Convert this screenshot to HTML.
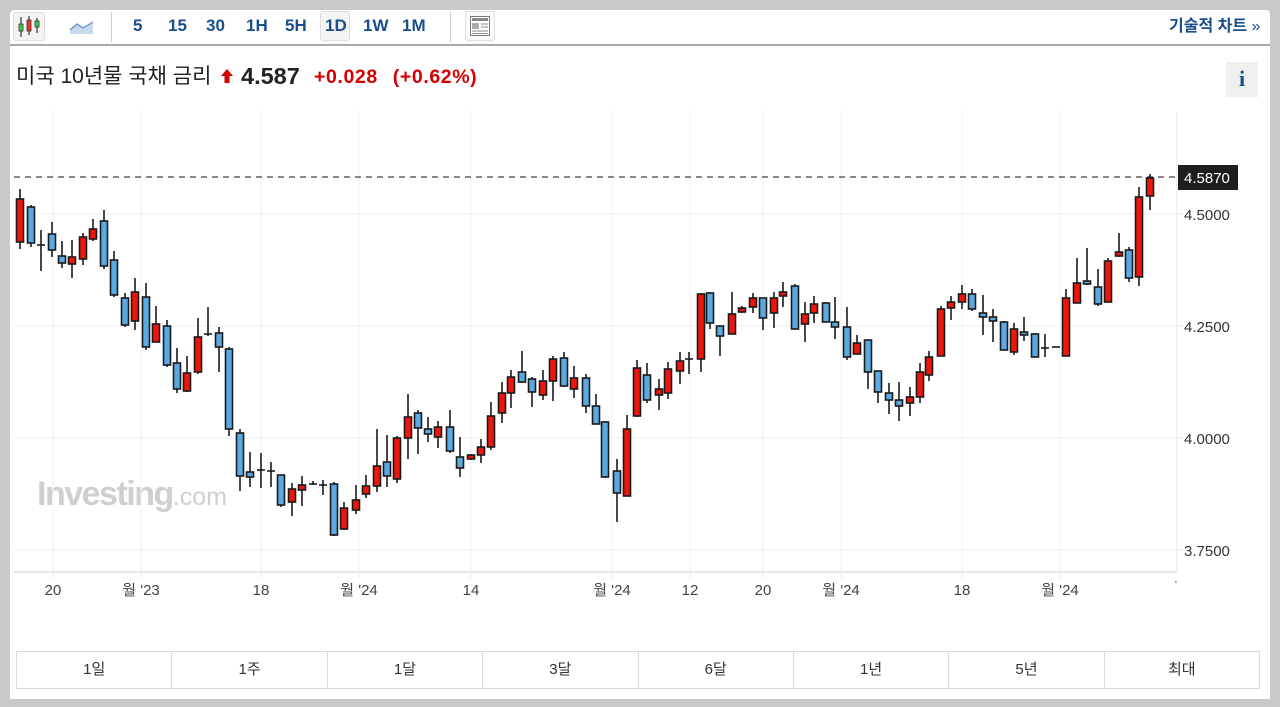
<!DOCTYPE html>
<html><head><meta charset="utf-8"><style>
*{margin:0;padding:0;box-sizing:border-box}
body{width:1280px;height:707px;background:#c9c9c9;font-family:"Liberation Sans","Noto Sans CJK KR",sans-serif;position:relative;overflow:hidden}
#panel{position:absolute;left:10px;top:10px;width:1260px;height:689px;background:#fff;border-radius:4px 4px 0 0}
.tb{position:absolute;top:0;left:0;width:1260px;height:36px;border-bottom:2px solid #a8a8a8}
.tf{position:absolute;top:6px;font-size:17px;font-weight:bold;color:#1b4f8c}
.btn{position:absolute;border:1px solid #ddd;border-radius:3px;background:#f4f4f4}
.sep{position:absolute;top:0;width:1px;height:30px;background:#ccc}
.title{position:absolute;left:6px;top:54px;font-size:21px;color:#222;line-height:26px}
.xl{position:absolute;top:573px;font-size:15px;color:#444;transform:translateX(-50%);line-height:18px;white-space:nowrap}
.yl{position:absolute;left:1174px;font-size:15px;color:#333}
.bt{position:absolute;top:641px;left:6px;width:1244px;height:38px;border:1px solid #d8d8d8;display:flex}
.bt div{flex:1;border-right:1px solid #d8d8d8;text-align:center;line-height:36px;font-size:15px;color:#333}
.bt div:last-child{border-right:none}
</style></head><body>
<div id="panel">
<div class="tb">
 <div class="btn" style="left:3px;top:2px;width:32px;height:29px"></div>
 <svg style="position:absolute;left:7px;top:5px" width="26" height="24"><g stroke="#333" stroke-width="1.2"><line x1="4" y1="2" x2="4" y2="22"/><line x1="12" y1="1" x2="12" y2="20"/><line x1="20" y1="3" x2="20" y2="18"/></g><rect x="2" y="9" width="4" height="7" fill="#4c4" stroke="#333" stroke-width=".8"/><rect x="10" y="5" width="4" height="11" fill="#e33" stroke="#333" stroke-width=".8"/><rect x="18" y="6" width="4" height="6" fill="#4c4" stroke="#333" stroke-width=".8"/></svg>
 <svg style="position:absolute;left:59px;top:9px" width="26" height="16"><path d="M1 15 L1 11 L8 5 L14 9 L24 3 L24 15 Z" fill="#c9d9ef"/><path d="M1 11 L8 5 L14 9 L24 3" fill="none" stroke="#6b8fbf" stroke-width="1.3"/></svg>
 <div class="sep" style="left:101px;top:2px"></div>
 <div class="tf" style="left:123px">5</div>
 <div class="tf" style="left:158px">15</div>
 <div class="tf" style="left:196px">30</div>
 <div class="tf" style="left:236px">1H</div>
 <div class="tf" style="left:275px">5H</div>
 <div class="btn" style="left:310px;top:1px;width:30px;height:30px"></div>
 <div class="tf" style="left:315px">1D</div>
 <div class="tf" style="left:353px">1W</div>
 <div class="tf" style="left:392px">1M</div>
 <div class="sep" style="left:440px;top:2px"></div>
 <div class="btn" style="left:455px;top:1px;width:30px;height:30px;background:#fafafa"></div>
 <svg style="position:absolute;left:460px;top:6px" width="20" height="20"><rect x=".5" y=".5" width="19" height="19" fill="#fff" stroke="#777"/><rect x="2" y="2" width="16" height="3" fill="#888"/><rect x="2" y="7" width="7" height="6" fill="#aaa"/><g stroke="#888"><line x1="11" y1="8" x2="18" y2="8"/><line x1="11" y1="11" x2="18" y2="11"/><line x1="2" y1="15" x2="18" y2="15"/><line x1="2" y1="17.5" x2="18" y2="17.5"/></g></svg>
 <div style="position:absolute;left:1159px;top:7px;font-size:16px;line-height:20px;color:#1b4f8c;font-weight:bold">기술적 차트 <span style="font-weight:normal">»</span></div>
</div>
<div class="title">미국 10년물 국채 금리</div>
<svg style="position:absolute;left:210px;top:58px" width="14" height="16"><path d="M7 1 L13 8 L9.5 8 L9.5 15 L4.5 15 L4.5 8 L1 8 Z" fill="#d40000"/></svg>
<div style="position:absolute;left:231px;top:53px;font-size:23.5px;font-weight:bold;color:#222;line-height:26px">4.587</div>
<div style="position:absolute;left:304px;top:56px;font-size:19.5px;font-weight:bold;color:#d40000;line-height:22px;letter-spacing:.6px;word-spacing:9px">+0.028 (+0.62%)</div>
<div style="position:absolute;left:1216px;top:52px;width:32px;height:35px;background:#efefef"></div>
<div style="position:absolute;left:1216px;top:56px;width:32px;text-align:center;font-family:'Liberation Serif',serif;font-size:22px;font-weight:bold;color:#1b4f8c">i</div>
<div style="position:absolute;left:27px;top:465px;font-size:34px;font-weight:bold;color:#cfcfcf;letter-spacing:-1.5px">Investing<span style="font-weight:normal;font-size:25px;letter-spacing:0">.com</span></div>
</div>
<svg style="position:absolute;left:0;top:0" width="1280" height="707">
<g stroke="#f1f1f1" stroke-width="1">
<line x1="14" y1="214" x2="1177" y2="214"/><line x1="14" y1="326" x2="1177" y2="326"/><line x1="14" y1="438" x2="1177" y2="438"/><line x1="14" y1="550" x2="1177" y2="550"/>
<line x1="53" y1="110" x2="53" y2="572"/><line x1="141" y1="110" x2="141" y2="572"/><line x1="261" y1="110" x2="261" y2="572"/><line x1="359" y1="110" x2="359" y2="572"/><line x1="471" y1="110" x2="471" y2="572"/><line x1="612" y1="110" x2="612" y2="572"/><line x1="690" y1="110" x2="690" y2="572"/><line x1="763" y1="110" x2="763" y2="572"/><line x1="841" y1="110" x2="841" y2="572"/><line x1="962" y1="110" x2="962" y2="572"/><line x1="1060" y1="110" x2="1060" y2="572"/>
</g>
<line x1="14" y1="572" x2="1177" y2="572" stroke="#e3e7ee" stroke-width="2"/>
<line x1="1177" y1="112" x2="1177" y2="572" stroke="#e3e7ee" stroke-width="1"/>
<g stroke="#e3e7ee"><line x1="53" y1="572" x2="53" y2="578"/><line x1="141" y1="572" x2="141" y2="578"/><line x1="261" y1="572" x2="261" y2="578"/><line x1="359" y1="572" x2="359" y2="578"/><line x1="471" y1="572" x2="471" y2="578"/><line x1="612" y1="572" x2="612" y2="578"/><line x1="690" y1="572" x2="690" y2="578"/><line x1="763" y1="572" x2="763" y2="578"/><line x1="841" y1="572" x2="841" y2="578"/><line x1="962" y1="572" x2="962" y2="578"/><line x1="1060" y1="572" x2="1060" y2="578"/></g>
<line x1="14" y1="177" x2="1177" y2="177" stroke="#111" stroke-dasharray="6,5" stroke-width="1"/>
<rect x="1178" y="165" width="60" height="25" fill="#1e1e1e"/>
<text x="1184" y="183" font-family="Liberation Sans" font-size="15" fill="#fff">4.5870</text>
<g stroke="#e3e7ee"><line x1="1177" y1="214" x2="1183" y2="214"/><line x1="1177" y1="326" x2="1183" y2="326"/><line x1="1177" y1="438" x2="1183" y2="438"/><line x1="1177" y1="550" x2="1183" y2="550"/></g>
<g stroke="#1a1a1a" stroke-width="1.6">
<line x1="20" y1="189" x2="20" y2="249"/><rect x="16.5" y="199" width="7" height="43" fill="#f0150c"/>
<line x1="31" y1="205" x2="31" y2="247"/><rect x="27.5" y="207" width="7" height="36" fill="#5aa9e0"/>
<line x1="41" y1="230" x2="41" y2="271"/><line x1="37" y1="245" x2="45" y2="245"/>
<line x1="52" y1="222" x2="52" y2="257"/><rect x="48.5" y="234" width="7" height="16" fill="#5aa9e0"/>
<line x1="62" y1="241" x2="62" y2="268"/><rect x="58.5" y="256" width="7" height="7" fill="#5aa9e0"/>
<line x1="72" y1="240" x2="72" y2="278"/><rect x="68.5" y="257" width="7" height="7" fill="#f0150c"/>
<line x1="83" y1="233" x2="83" y2="265"/><rect x="79.5" y="237" width="7" height="22" fill="#f0150c"/>
<line x1="93" y1="219" x2="93" y2="241"/><rect x="89.5" y="229" width="7" height="10" fill="#f0150c"/>
<line x1="104" y1="210" x2="104" y2="269"/><rect x="100.5" y="221" width="7" height="45" fill="#5aa9e0"/>
<line x1="114" y1="251" x2="114" y2="297"/><rect x="110.5" y="260" width="7" height="35" fill="#5aa9e0"/>
<line x1="125" y1="293" x2="125" y2="327"/><rect x="121.5" y="298" width="7" height="27" fill="#5aa9e0"/>
<line x1="135" y1="278" x2="135" y2="330"/><rect x="131.5" y="292" width="7" height="29" fill="#f0150c"/>
<line x1="146" y1="283" x2="146" y2="350"/><rect x="142.5" y="297" width="7" height="50" fill="#5aa9e0"/>
<line x1="156" y1="306" x2="156" y2="342"/><rect x="152.5" y="324" width="7" height="18" fill="#f0150c"/>
<line x1="167" y1="320" x2="167" y2="367"/><rect x="163.5" y="326" width="7" height="39" fill="#5aa9e0"/>
<line x1="177" y1="348" x2="177" y2="393"/><rect x="173.5" y="363" width="7" height="26" fill="#5aa9e0"/>
<line x1="187" y1="356" x2="187" y2="392"/><rect x="183.5" y="373" width="7" height="18" fill="#f0150c"/>
<line x1="198" y1="318" x2="198" y2="374"/><rect x="194.5" y="337" width="7" height="35" fill="#f0150c"/>
<line x1="208" y1="307" x2="208" y2="336"/><line x1="204" y1="334" x2="212" y2="334"/>
<line x1="219" y1="327" x2="219" y2="372"/><rect x="215.5" y="333" width="7" height="14" fill="#5aa9e0"/>
<line x1="229" y1="347" x2="229" y2="436"/><rect x="225.5" y="349" width="7" height="80" fill="#5aa9e0"/>
<line x1="240" y1="429" x2="240" y2="491"/><rect x="236.5" y="433" width="7" height="43" fill="#5aa9e0"/>
<line x1="250" y1="452" x2="250" y2="487"/><rect x="246.5" y="472" width="7" height="5" fill="#5aa9e0"/>
<line x1="261" y1="453" x2="261" y2="488"/><line x1="257" y1="470" x2="265" y2="470"/>
<line x1="271" y1="462" x2="271" y2="487"/><line x1="267" y1="471" x2="275" y2="471"/>
<line x1="281" y1="475" x2="281" y2="507"/><rect x="277.5" y="475" width="7" height="30" fill="#5aa9e0"/>
<line x1="292" y1="483" x2="292" y2="516"/><rect x="288.5" y="489" width="7" height="13" fill="#f0150c"/>
<line x1="302" y1="476" x2="302" y2="506"/><rect x="298.5" y="485" width="7" height="5" fill="#f0150c"/>
<line x1="313" y1="481" x2="313" y2="485"/><line x1="309" y1="484" x2="317" y2="484"/>
<line x1="323" y1="480" x2="323" y2="495"/><line x1="319" y1="485" x2="327" y2="485"/>
<line x1="334" y1="482" x2="334" y2="536"/><rect x="330.5" y="484" width="7" height="51" fill="#5aa9e0"/>
<line x1="344" y1="502" x2="344" y2="530"/><rect x="340.5" y="508" width="7" height="21" fill="#f0150c"/>
<line x1="356" y1="485" x2="356" y2="514"/><rect x="352.5" y="500" width="7" height="10" fill="#f0150c"/>
<line x1="366" y1="475" x2="366" y2="498"/><rect x="362.5" y="486" width="7" height="8" fill="#f0150c"/>
<line x1="377" y1="429" x2="377" y2="492"/><rect x="373.5" y="466" width="7" height="20" fill="#f0150c"/>
<line x1="387" y1="435" x2="387" y2="487"/><rect x="383.5" y="462" width="7" height="14" fill="#5aa9e0"/>
<line x1="397" y1="436" x2="397" y2="483"/><rect x="393.5" y="438" width="7" height="41" fill="#f0150c"/>
<line x1="408" y1="394" x2="408" y2="459"/><rect x="404.5" y="417" width="7" height="21" fill="#f0150c"/>
<line x1="418" y1="410" x2="418" y2="454"/><rect x="414.5" y="413" width="7" height="15" fill="#5aa9e0"/>
<line x1="428" y1="417" x2="428" y2="442"/><rect x="424.5" y="429" width="7" height="5" fill="#5aa9e0"/>
<line x1="438" y1="421" x2="438" y2="448"/><rect x="434.5" y="427" width="7" height="10" fill="#f0150c"/>
<line x1="450" y1="410" x2="450" y2="453"/><rect x="446.5" y="427" width="7" height="24" fill="#5aa9e0"/>
<line x1="460" y1="437" x2="460" y2="477"/><rect x="456.5" y="457" width="7" height="11" fill="#5aa9e0"/>
<line x1="471" y1="454" x2="471" y2="460"/><rect x="467.5" y="455" width="7" height="4" fill="#f0150c"/>
<line x1="481" y1="439" x2="481" y2="463"/><rect x="477.5" y="447" width="7" height="8" fill="#f0150c"/>
<line x1="491" y1="402" x2="491" y2="450"/><rect x="487.5" y="416" width="7" height="31" fill="#f0150c"/>
<line x1="502" y1="382" x2="502" y2="423"/><rect x="498.5" y="393" width="7" height="20" fill="#f0150c"/>
<line x1="511" y1="370" x2="511" y2="408"/><rect x="507.5" y="377" width="7" height="16" fill="#f0150c"/>
<line x1="522" y1="351" x2="522" y2="383"/><rect x="518.5" y="372" width="7" height="10" fill="#5aa9e0"/>
<line x1="532" y1="377" x2="532" y2="407"/><rect x="528.5" y="379" width="7" height="13" fill="#5aa9e0"/>
<line x1="543" y1="370" x2="543" y2="400"/><rect x="539.5" y="381" width="7" height="14" fill="#f0150c"/>
<line x1="553" y1="356" x2="553" y2="401"/><rect x="549.5" y="359" width="7" height="22" fill="#f0150c"/>
<line x1="564" y1="352" x2="564" y2="387"/><rect x="560.5" y="358" width="7" height="28" fill="#5aa9e0"/>
<line x1="574" y1="366" x2="574" y2="398"/><rect x="570.5" y="378" width="7" height="11" fill="#f0150c"/>
<line x1="586" y1="374" x2="586" y2="413"/><rect x="582.5" y="378" width="7" height="28" fill="#5aa9e0"/>
<line x1="596" y1="394" x2="596" y2="424"/><rect x="592.5" y="406" width="7" height="18" fill="#5aa9e0"/>
<line x1="605" y1="421" x2="605" y2="478"/><rect x="601.5" y="422" width="7" height="55" fill="#5aa9e0"/>
<line x1="617" y1="459" x2="617" y2="522"/><rect x="613.5" y="471" width="7" height="22" fill="#5aa9e0"/>
<line x1="627" y1="415" x2="627" y2="496"/><rect x="623.5" y="429" width="7" height="67" fill="#f0150c"/>
<line x1="637" y1="360" x2="637" y2="417"/><rect x="633.5" y="368" width="7" height="48" fill="#f0150c"/>
<line x1="647" y1="363" x2="647" y2="403"/><rect x="643.5" y="375" width="7" height="25" fill="#5aa9e0"/>
<line x1="659" y1="379" x2="659" y2="410"/><rect x="655.5" y="389" width="7" height="6" fill="#f0150c"/>
<line x1="668" y1="362" x2="668" y2="399"/><rect x="664.5" y="369" width="7" height="24" fill="#f0150c"/>
<line x1="680" y1="352" x2="680" y2="384"/><rect x="676.5" y="361" width="7" height="10" fill="#f0150c"/>
<line x1="689" y1="352" x2="689" y2="374"/><line x1="685" y1="359" x2="693" y2="359"/>
<line x1="701" y1="293" x2="701" y2="372"/><rect x="697.5" y="294" width="7" height="65" fill="#f0150c"/>
<line x1="710" y1="292" x2="710" y2="329"/><rect x="706.5" y="293" width="7" height="30" fill="#5aa9e0"/>
<line x1="720" y1="326" x2="720" y2="356"/><rect x="716.5" y="326" width="7" height="10" fill="#5aa9e0"/>
<line x1="732" y1="292" x2="732" y2="334"/><rect x="728.5" y="314" width="7" height="20" fill="#f0150c"/>
<line x1="742" y1="306" x2="742" y2="313"/><rect x="738.5" y="308" width="7" height="4" fill="#f0150c"/>
<line x1="753" y1="293" x2="753" y2="313"/><rect x="749.5" y="298" width="7" height="9" fill="#f0150c"/>
<line x1="763" y1="298" x2="763" y2="330"/><rect x="759.5" y="298" width="7" height="20" fill="#5aa9e0"/>
<line x1="774" y1="292" x2="774" y2="328"/><rect x="770.5" y="298" width="7" height="15" fill="#f0150c"/>
<line x1="783" y1="282" x2="783" y2="307"/><rect x="779.5" y="292" width="7" height="4" fill="#f0150c"/>
<line x1="795" y1="284" x2="795" y2="329"/><rect x="791.5" y="286" width="7" height="43" fill="#5aa9e0"/>
<line x1="805" y1="302" x2="805" y2="342"/><rect x="801.5" y="314" width="7" height="10" fill="#f0150c"/>
<line x1="814" y1="296" x2="814" y2="323"/><rect x="810.5" y="304" width="7" height="9" fill="#f0150c"/>
<line x1="826" y1="302" x2="826" y2="322"/><rect x="822.5" y="303" width="7" height="19" fill="#5aa9e0"/>
<line x1="835" y1="297" x2="835" y2="339"/><rect x="831.5" y="322" width="7" height="5" fill="#5aa9e0"/>
<line x1="847" y1="307" x2="847" y2="360"/><rect x="843.5" y="327" width="7" height="30" fill="#5aa9e0"/>
<line x1="857" y1="335" x2="857" y2="354"/><rect x="853.5" y="343" width="7" height="11" fill="#f0150c"/>
<line x1="868" y1="340" x2="868" y2="389"/><rect x="864.5" y="340" width="7" height="32" fill="#5aa9e0"/>
<line x1="878" y1="371" x2="878" y2="403"/><rect x="874.5" y="371" width="7" height="21" fill="#5aa9e0"/>
<line x1="889" y1="383" x2="889" y2="414"/><rect x="885.5" y="393" width="7" height="7" fill="#5aa9e0"/>
<line x1="899" y1="382" x2="899" y2="421"/><rect x="895.5" y="400" width="7" height="6" fill="#5aa9e0"/>
<line x1="910" y1="387" x2="910" y2="416"/><rect x="906.5" y="397" width="7" height="6" fill="#f0150c"/>
<line x1="920" y1="363" x2="920" y2="403"/><rect x="916.5" y="372" width="7" height="25" fill="#f0150c"/>
<line x1="929" y1="351" x2="929" y2="381"/><rect x="925.5" y="357" width="7" height="18" fill="#f0150c"/>
<line x1="941" y1="306" x2="941" y2="356"/><rect x="937.5" y="309" width="7" height="47" fill="#f0150c"/>
<line x1="951" y1="296" x2="951" y2="320"/><rect x="947.5" y="302" width="7" height="6" fill="#f0150c"/>
<line x1="962" y1="285" x2="962" y2="309"/><rect x="958.5" y="294" width="7" height="8" fill="#f0150c"/>
<line x1="972" y1="289" x2="972" y2="311"/><rect x="968.5" y="294" width="7" height="15" fill="#5aa9e0"/>
<line x1="983" y1="295" x2="983" y2="335"/><rect x="979.5" y="313" width="7" height="4" fill="#5aa9e0"/>
<line x1="993" y1="309" x2="993" y2="342"/><rect x="989.5" y="317" width="7" height="4" fill="#5aa9e0"/>
<line x1="1004" y1="321" x2="1004" y2="350"/><rect x="1000.5" y="322" width="7" height="28" fill="#5aa9e0"/>
<line x1="1014" y1="323" x2="1014" y2="355"/><rect x="1010.5" y="329" width="7" height="23" fill="#f0150c"/>
<line x1="1024" y1="317" x2="1024" y2="341"/><rect x="1020.5" y="332" width="7" height="3" fill="#5aa9e0"/>
<line x1="1035" y1="333" x2="1035" y2="357"/><rect x="1031.5" y="334" width="7" height="23" fill="#5aa9e0"/>
<line x1="1045" y1="334" x2="1045" y2="357"/><line x1="1041" y1="348" x2="1049" y2="348"/>
<line x1="1052" y1="347" x2="1060" y2="347"/>
<line x1="1066" y1="289" x2="1066" y2="356"/><rect x="1062.5" y="298" width="7" height="58" fill="#f0150c"/>
<line x1="1077" y1="258" x2="1077" y2="303"/><rect x="1073.5" y="283" width="7" height="20" fill="#f0150c"/>
<line x1="1087" y1="248" x2="1087" y2="285"/><rect x="1083.5" y="281" width="7" height="3" fill="#5aa9e0"/>
<line x1="1098" y1="269" x2="1098" y2="306"/><rect x="1094.5" y="287" width="7" height="17" fill="#5aa9e0"/>
<line x1="1108" y1="258" x2="1108" y2="302"/><rect x="1104.5" y="261" width="7" height="41" fill="#f0150c"/>
<line x1="1119" y1="233" x2="1119" y2="257"/><rect x="1115.5" y="252" width="7" height="4" fill="#f0150c"/>
<line x1="1129" y1="247" x2="1129" y2="282"/><rect x="1125.5" y="250" width="7" height="28" fill="#5aa9e0"/>
<line x1="1139" y1="187" x2="1139" y2="286"/><rect x="1135.5" y="197" width="7" height="80" fill="#f0150c"/>
<line x1="1150" y1="174" x2="1150" y2="210"/><rect x="1146.5" y="178" width="7" height="18" fill="#f0150c"/>
</g>
</svg>
<div class="yl" style="top:207px;left:1184px">4.5000</div>
<div class="yl" style="top:319px;left:1184px">4.2500</div>
<div class="yl" style="top:431px;left:1184px">4.0000</div>
<div class="yl" style="top:543px;left:1184px">3.7500</div>
<div class="xl" style="left:53px;top:582px">20</div>
<div class="xl" style="left:141px;top:582px">월 '23</div>
<div class="xl" style="left:261px;top:582px">18</div>
<div class="xl" style="left:359px;top:582px">월 '24</div>
<div class="xl" style="left:471px;top:582px">14</div>
<div class="xl" style="left:612px;top:582px">월 '24</div>
<div class="xl" style="left:690px;top:582px">12</div>
<div class="xl" style="left:763px;top:582px">20</div>
<div class="xl" style="left:841px;top:582px">월 '24</div>
<div class="xl" style="left:962px;top:582px">18</div>
<div class="xl" style="left:1060px;top:582px">월 '24</div>
<div class="xl" style="left:1176px;top:577px;font-size:10px">'</div>
<div class="bt" style="left:16px;top:651px"><div>1일</div><div>1주</div><div>1달</div><div>3달</div><div>6달</div><div>1년</div><div>5년</div><div>최대</div></div>
</body></html>
